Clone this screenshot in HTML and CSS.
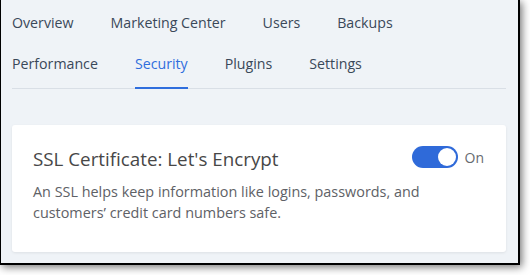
FILE: index.html
```html
<!DOCTYPE html>
<html lang="en">
<head>
    <meta charset="UTF-8">
    <title>Security</title>
    <link rel="stylesheet" href="styles.css">
</head>
<body>
    <div class="frame">
        <nav class="tabs">
            <div class="tab-row">
                <a class="tab">Overview</a>
                <a class="tab">Marketing Center</a>
                <a class="tab">Users</a>
                <a class="tab">Backups</a>
            </div>
            <div class="tab-row last">
                <a class="tab">Performance</a>
                <a class="tab active">Security</a>
                <a class="tab">Plugins</a>
                <a class="tab">Settings</a>
            </div>
        </nav>

        <section class="card">
            <div class="card-head">
                <h2>SSL Certificate: Let's Encrypt</h2>
                <div class="toggle-group">
                    <label class="toggle-switch">
                        <input type="checkbox" checked>
                        <span class="toggle-slider"></span>
                    </label>
                    <span class="toggle-label">On</span>
                </div>
            </div>
            <p class="card-desc">An SSL helps keep information like logins, passwords, and customers’ credit card numbers safe.</p>
        </section>
    </div>
</body>
</html>
```

FILE: styles.css
```css
* {
    margin: 0;
    padding: 0;
    box-sizing: border-box;
}

body {
    background: #ffffff;
    font-family: "Open Sans", "Noto Sans", sans-serif;
    width: 530px;
    height: 275px;
    overflow: hidden;
}

.frame {
    width: 520px;
    height: 265px;
    background: #eff3f7;
    border-left: 1px solid #000;
    border-right: 2px solid #000;
    border-bottom: 2px solid #000;
    box-shadow: 2px 2px 8px rgba(0, 0, 0, 0.55);
    padding: 13px 12px 0 11px;
}

.tabs {
    border-bottom: 1px solid #d9dfe6;
}

.tab-row {
    display: flex;
    gap: 37px;
    margin-bottom: 21px;
}

.tab-row.last {
    margin-bottom: -1px;
}

.tab {
    font-size: 14.2px;
    line-height: 20px;
    color: #3a4859;
    text-decoration: none;
}

.tab-row.last .tab {
    padding-bottom: 13px;
    border-bottom: 2px solid transparent;
}

.tab.active {
    color: #2f6edd;
    border-bottom-color: #2f6edd !important;
}

.card {
    margin-top: 36px;
    background: #ffffff;
    border-radius: 3px;
    box-shadow: 0 1px 3px rgba(0, 0, 0, 0.08);
    padding: 22px 22px 29px 21px;
    height: 127px;
}

.card-head {
    display: flex;
    justify-content: space-between;
    align-items: flex-start;
}

.card-head h2 {
    font-size: 18.8px;
    font-weight: 400;
    line-height: 24px;
    color: #474747;
}

.toggle-group {
    display: flex;
    align-items: center;
    gap: 7px;
    margin-top: -1px;
}

.toggle-switch {
    position: relative;
    display: inline-block;
    width: 46px;
    height: 22px;
}

.toggle-switch input {
    opacity: 0;
    width: 0;
    height: 0;
}

.toggle-slider {
    position: absolute;
    inset: 0;
    background: #c5ccd5;
    border-radius: 11px;
}

.toggle-slider:before {
    position: absolute;
    content: "";
    width: 18px;
    height: 18px;
    left: 2px;
    top: 2px;
    background: #fff;
    border-radius: 50%;
}

input:checked + .toggle-slider {
    background: #2f6ad9;
}

input:checked + .toggle-slider:before {
    transform: translateX(24px);
}

.toggle-label {
    font-size: 14px;
    color: #666a70;
}

.card-desc {
    max-width: 420px;
    margin-top: 10px;
    font-size: 14.4px;
    line-height: 21px;
    color: #5e6166;
}
```
